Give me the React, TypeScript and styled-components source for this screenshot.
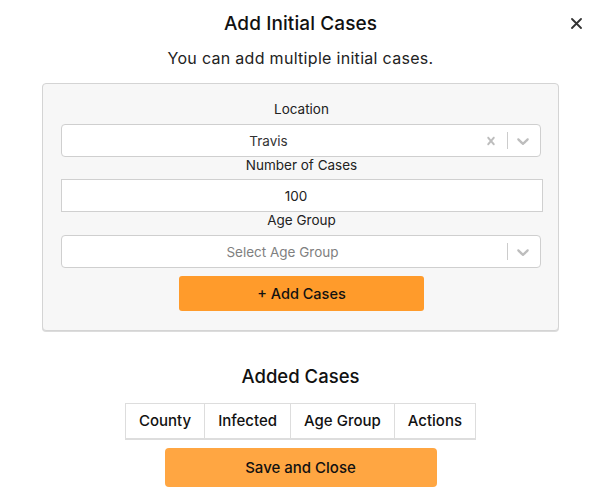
import React from "react";
import styled, { createGlobalStyle } from "styled-components";

const Global = createGlobalStyle`
  html, body { margin: 0; padding: 0; background: #fff; }
  body { font-family: "Inter", "Noto Sans", sans-serif; color: #1a1a1a; }
  * { box-sizing: border-box; }
`;

const Page = styled.div`
  width: 601px;
  padding: 0 42px;
  display: flex;
  flex-direction: column;
  align-items: stretch;
`;

const Header = styled.div`
  display: grid;
  grid-template-columns: 1fr auto 1fr;
  align-items: center;
  height: 44px;
  margin: 0 -42px;
  padding: 3px 19px 0;
`;

const Title = styled.h2`
  grid-column: 2;
  margin: 0;
  font-size: 19px;
  font-weight: 500;
  letter-spacing: 0.1px;
  color: #111;
  line-height: 41px;
`;

const CloseButton = styled.button`
  grid-column: 3;
  justify-self: end;
  width: 12px;
  height: 14px;
  padding: 0;
  border: 0;
  background: none;
  display: flex;
  align-items: center;
  justify-content: center;
  cursor: pointer;
`;

const Subtitle = styled.p`
  margin: 4px 0 0;
  text-align: center;
  font-size: 16px;
  letter-spacing: 0.3px;
  line-height: 20px;
  color: #222;
`;

const Panel = styled.div`
  margin-top: 15px;
  background: #f7f7f7;
  border: 1px solid #d4d4d4;
  border-radius: 4px;
  box-shadow: 0 1px 0 #dcdcdc;
  padding: 17px 16px 19px 18px;
  display: flex;
  flex-direction: column;
  align-items: stretch;
`;

const Label = styled.label`
  display: block;
  text-align: center;
  font-size: 13.5px;
  line-height: 16px;
  color: #222;
`;

const SelectBox = styled.div`
  margin: 7px 1px 0 0;
  height: 33px;
  background: #fff;
  border: 1px solid #cfcfcf;
  border-radius: 4px;
  display: flex;
  align-items: stretch;
`;

const ValueArea = styled.div<{ $placeholder?: boolean }>`
  flex: 1;
  display: flex;
  align-items: center;
  justify-content: center;
  padding: 0 10px 0 6px;
  font-size: 13.5px;
  color: ${(p) => (p.$placeholder ? "#808080" : "#333")};
`;

const Indicator = styled.div<{ $pl: number; $pr: number }>`
  display: flex;
  align-items: center;
  padding: 0 ${(p) => p.$pr}px 0 ${(p) => p.$pl}px;
  color: #bdbdbd;
`;

const Separator = styled.span`
  align-self: stretch;
  width: 1px;
  margin: 7px 0;
  background: #cccccc;
`;

const NumberInput = styled.input`
  margin: 6px -1px 0 0;
  height: 33px;
  border: 1.5px solid #d0d0d0;
  background: #fff;
  text-align: center;
  font-family: inherit;
  font-size: 13.5px;
  color: #222;
  padding: 0 12px 0 0;
  outline: none;
`;

const AddButton = styled.button`
  align-self: center;
  margin-top: 8px;
  width: 245px;
  height: 35px;
  border: 0;
  border-radius: 3px;
  background: #ff9b2b;
  font-family: inherit;
  font-size: 14.5px;
  font-weight: 500;
  color: #111;
  cursor: pointer;
`;

const SectionTitle = styled.h3`
  margin: 33px 0 0;
  text-align: center;
  font-size: 18.5px;
  font-weight: 500;
  line-height: 24px;
  color: #111;
`;

const Table = styled.table`
  align-self: center;
  margin-top: 15px;
  border-collapse: collapse;
  background: #fff;
`;

const Th = styled.th`
  height: 35px;
  padding: 0 13px;
  border: 1px solid #dddddd;
  border-bottom-width: 2px;
  font-size: 15px;
  font-weight: 500;
  color: #111;
  white-space: nowrap;
`;

const SaveButton = styled.button`
  align-self: center;
  margin-top: 8px;
  width: 272px;
  height: 39px;
  border: 0;
  border-radius: 4px;
  background: #ffa642;
  font-family: inherit;
  font-size: 15px;
  font-weight: 500;
  color: #111;
  cursor: pointer;
`;

const Cross = ({ size }: { size: number }) => (
  <svg width={size} height={size} viewBox="0 0 20 20" fill="currentColor" aria-hidden>
    <path d="M14.348 14.849c-0.469 0.469-1.229 0.469-1.697 0l-2.651-3.030-2.651 3.029c-0.469 0.469-1.229 0.469-1.697 0-0.469-0.469-0.469-1.229 0-1.697l2.758-3.15-2.759-3.152c-0.469-0.469-0.469-1.228 0-1.697s1.228-0.469 1.697 0l2.652 3.031 2.651-3.031c0.469-0.469 1.228-0.469 1.697 0s0.469 1.229 0 1.697l-2.758 3.152 2.758 3.15c0.469 0.469 0.469 1.229 0 1.698z" />
  </svg>
);

const Chevron = () => (
  <svg width={20} height={20} viewBox="0 0 20 20" fill="currentColor" aria-hidden>
    <path d="M4.516 7.548c0.436-0.446 1.043-0.481 1.576 0l3.908 3.747 3.908-3.747c0.533-0.481 1.141-0.446 1.574 0 0.436 0.445 0.408 1.197 0 1.615-0.406 0.418-4.695 4.502-4.695 4.502-0.217 0.223-0.502 0.335-0.787 0.335s-0.57-0.112-0.789-0.335c0 0-4.287-4.084-4.695-4.502s-0.436-1.170 0-1.615z" />
  </svg>
);

export default function App() {
  return (
    <>
      <Global />
      <Page>
        <Header>
          <Title>Add Initial Cases</Title>
          <CloseButton aria-label="Close">
            <svg width="11" height="11" viewBox="0 0 11 11" aria-hidden>
              <path d="M1 1L10 10M10 1L1 10" stroke="#333" strokeWidth="1.8" strokeLinecap="round" />
            </svg>
          </CloseButton>
        </Header>
        <Subtitle>You can add multiple initial cases.</Subtitle>
        <Panel>
          <Label>Location</Label>
          <SelectBox>
            <ValueArea>Travis</ValueArea>
            <Indicator $pl={4} $pr={8}>
              <Cross size={16} />
            </Indicator>
            <Separator />
            <Indicator $pl={5} $pr={7}>
              <Chevron />
            </Indicator>
          </SelectBox>
          <Label>Number of Cases</Label>
          <NumberInput type="text" defaultValue="100" />
          <Label>Age Group</Label>
          <SelectBox>
            <ValueArea $placeholder>Select Age Group</ValueArea>
            <Separator />
            <Indicator $pl={5} $pr={7}>
              <Chevron />
            </Indicator>
          </SelectBox>
          <AddButton>+ Add Cases</AddButton>
        </Panel>
        <SectionTitle>Added Cases</SectionTitle>
        <Table>
          <thead>
            <tr>
              <Th>County</Th>
              <Th>Infected</Th>
              <Th>Age Group</Th>
              <Th>Actions</Th>
            </tr>
          </thead>
        </Table>
        <SaveButton>Save and Close</SaveButton>
      </Page>
    </>
  );
}
